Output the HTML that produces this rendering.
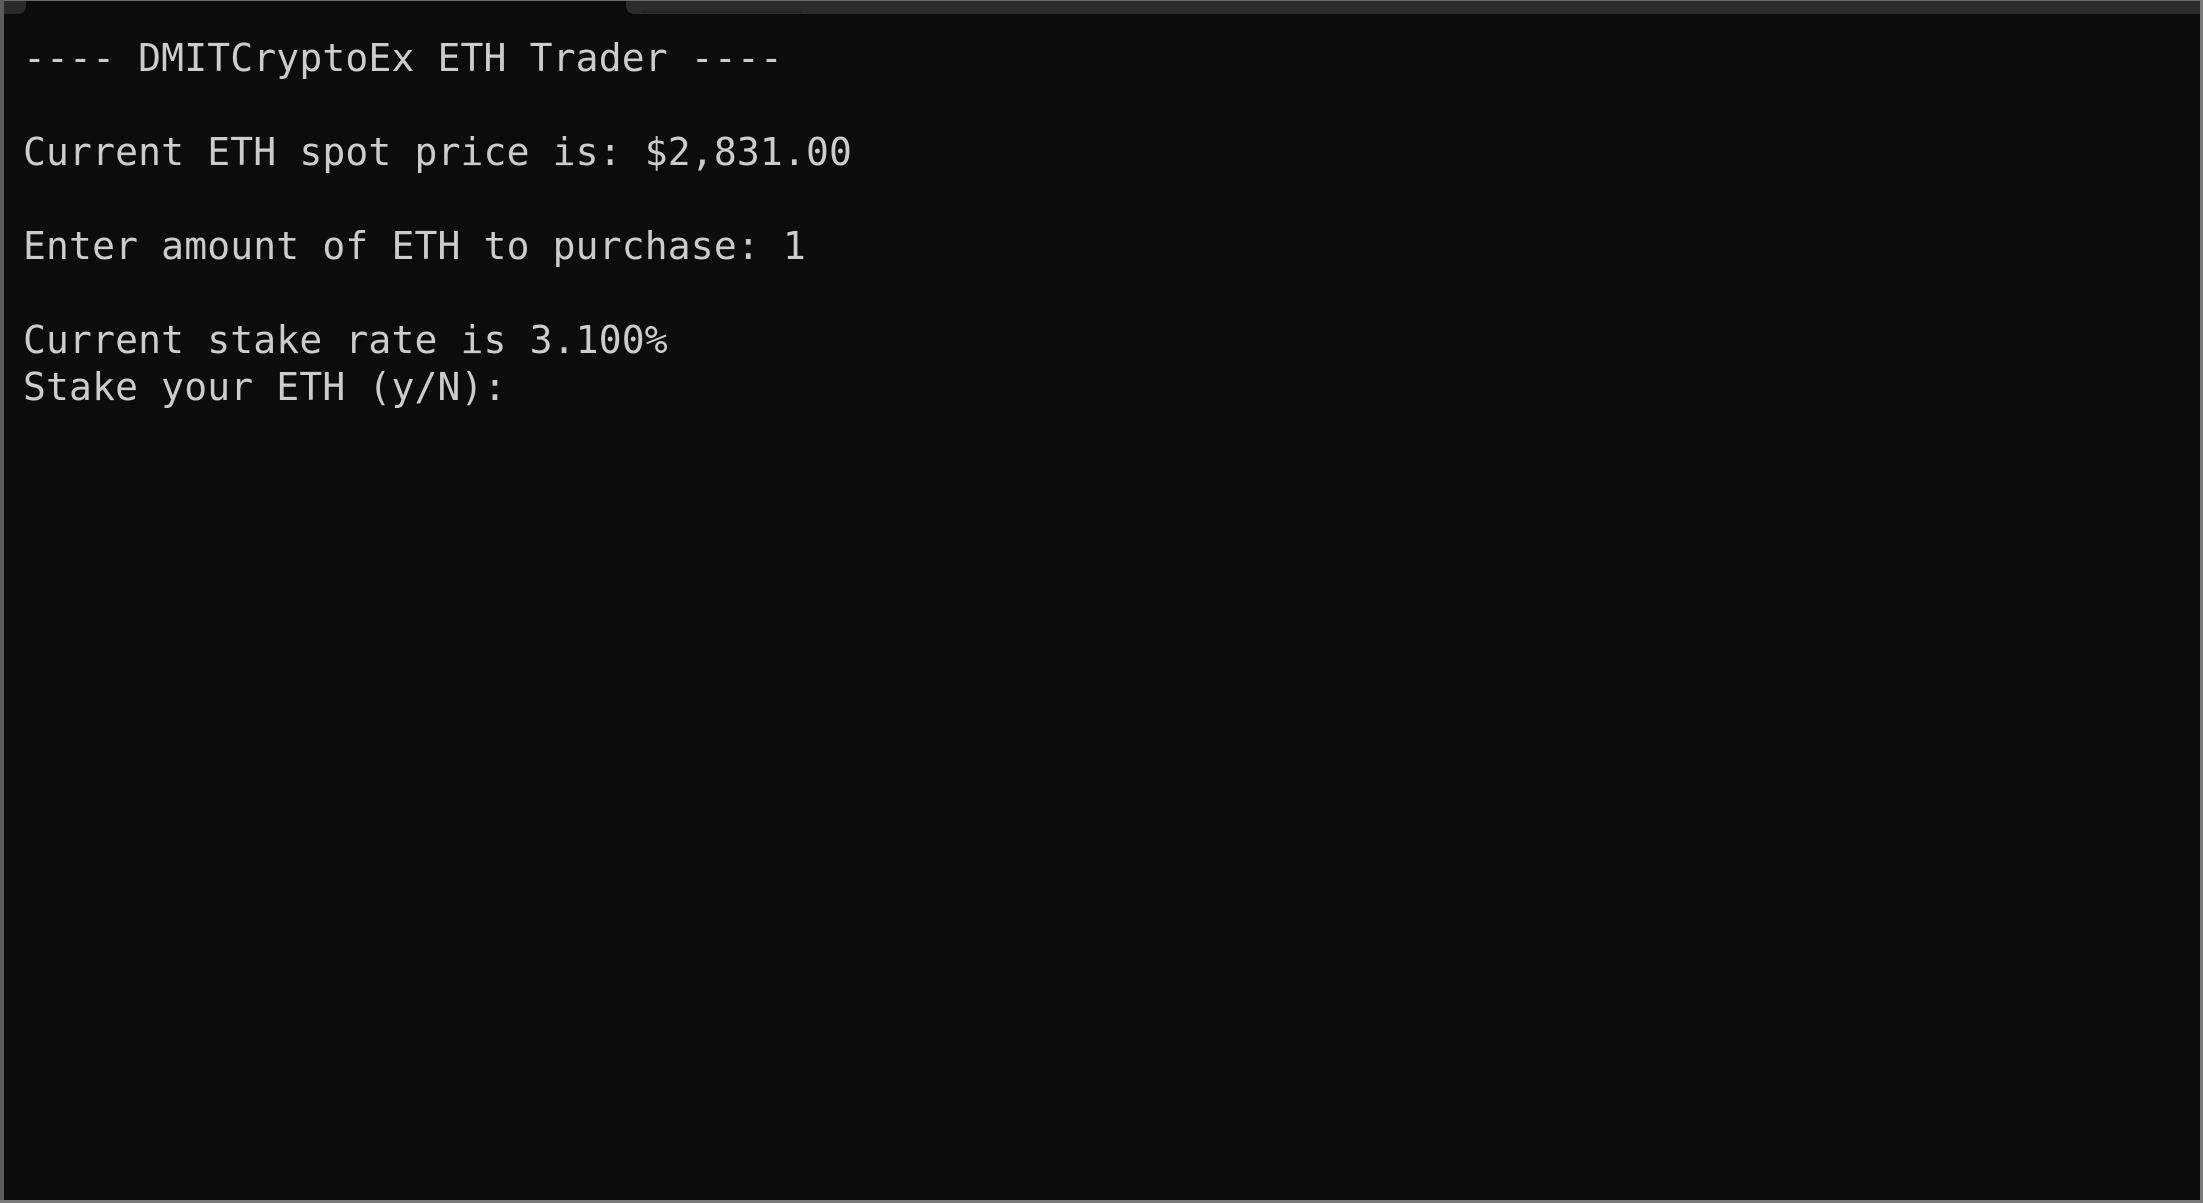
<!DOCTYPE html>
<html><head><meta charset="utf-8"><style>
html,body{margin:0;padding:0;}
body{width:2203px;height:1203px;background:#0c0c0c;position:relative;overflow:hidden;}
.top{position:absolute;left:0;top:0;width:2203px;height:14px;background:#0c0c0c;border-top:1px solid #6a6a6a;box-sizing:border-box;}
.tabL{position:absolute;left:4px;top:1px;width:22px;height:13px;background:#2a2a2a;border-bottom-right-radius:8px;}
.tabR{position:absolute;left:626px;top:1px;right:0;height:13px;background:#2c2c2c;border-bottom-left-radius:8px;}
.tabR2{position:absolute;left:642px;top:10px;width:160px;height:3px;background:#262626;}
.lb{position:absolute;left:0;top:0;width:4px;height:1203px;background:#5c5c5c;}
.rb{position:absolute;right:0;top:0;width:3px;height:1203px;background:#7a7a7a;}
.bb{position:absolute;left:0;bottom:0;width:2203px;height:3px;background:#7a7a7a;}
pre{position:absolute;left:23px;top:35px;margin:0;font-family:"DejaVu Sans Mono","Liberation Mono",monospace;font-size:38px;line-height:47px;letter-spacing:0.15px;color:#cccccc;}
</style></head><body>
<div class="top"></div>
<div class="tabL"></div>
<div class="tabR"></div>
<div class="tabR2"></div>
<div class="lb"></div><div class="rb"></div><div class="bb"></div>
<pre>---- DMITCryptoEx ETH Trader ----

Current ETH spot price is: $2,831.00

Enter amount of ETH to purchase: 1

Current stake rate is 3.100%
Stake your ETH (y/N):</pre>
</body></html>
